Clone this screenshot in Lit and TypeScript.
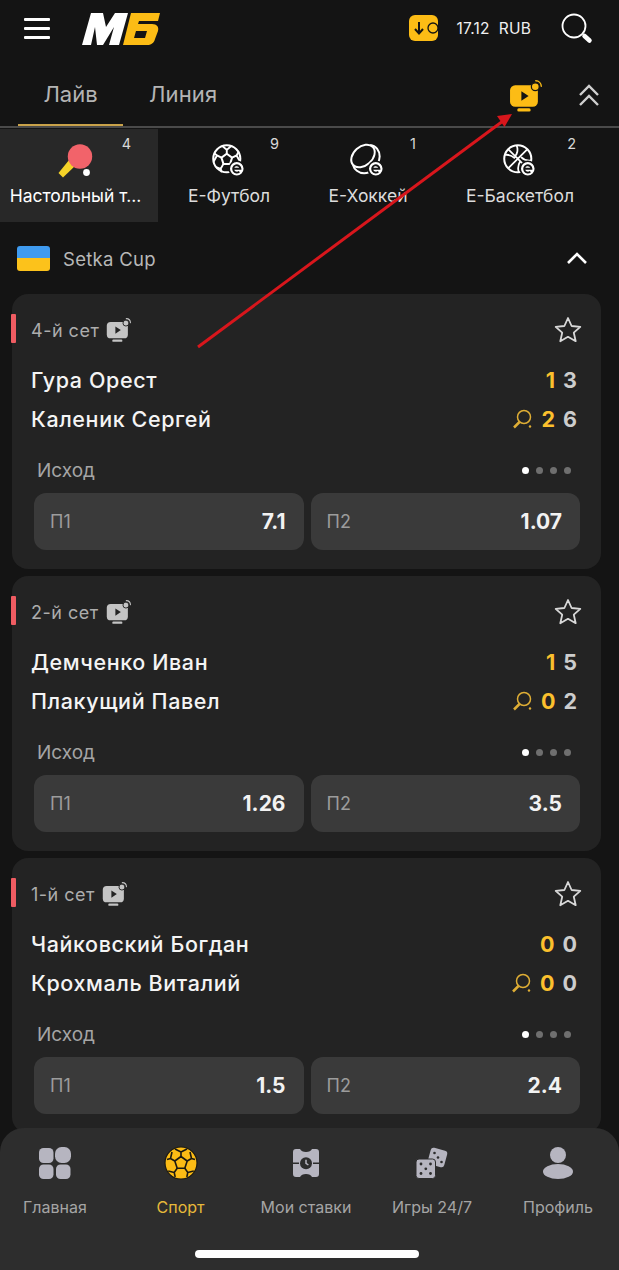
import { LitElement, html, css, svg } from "lit";
import { customElement } from "lit/decorators.js";

const tvIcon = (body: string, play: string, w = 32) => html`<svg width=${w} height=${w} viewBox="0 0 32 32" fill="none">
  <rect x="1" y="5" width="27" height="21" rx="5" fill=${body} />
  <path d="M12 11v9l7-4.500z" fill=${play} />
  <rect x="8" y="27.500" width="13" height="3" rx="1.500" fill=${body} />
  <circle cx="25.500" cy="6.500" r="3.800" fill=${body} stroke=${play} stroke-width="1.200" />
  <path d="M26 0.800a5.500 5.500 0 0 1 5.300 5.300" stroke=${body} stroke-width="1.400" stroke-linecap="round" />
</svg>`;

const eBadge = svg`<circle cx="25" cy="25" r="6.800" fill="#fff" stroke="#141414" stroke-width="1.400"/>
  <path d="M21.700 25h6.600a3.300 3.300 0 1 0-1 2.500" fill="none" stroke="#141414" stroke-width="1.700"/>`;

const sportsIcons: Record<string, unknown> = {
  tt: html`<svg width="40" height="40" viewBox="0 0 40 40">
    <path d="M13.500 18.500l6 6L7 36.500l-4.500-4.500z" fill="#f5d328" />
    <circle cx="24" cy="15.500" r="12.200" fill="#f2636a" />
    <circle cx="30.500" cy="31.500" r="3.400" fill="#fff" />
  </svg>`,
  football: html`<svg width="40" height="40" viewBox="0 0 36 36" fill="none" stroke="#fff" stroke-width="1.800">
    <circle cx="16" cy="16" r="12.200" />
    <path d="M16 11.500l4.800 3.500-1.800 5.600h-6l-1.800-5.600z" />
    <path d="M16 11.500V8l-4-3.500M16 8l4-3.500M20.800 15l4-2 2-3.500M24.800 13l2.800 5M19 20.600l2.500 4.500 4-1M13 20.600l-2.500 4.500 1 3M11.200 15l-4-2-2.500-2M7.200 13l-3 5.500M10.500 25l-4-1.500" stroke-width="1.700" />
    ${eBadge}
  </svg>`,
  hockey: html`<svg width="40" height="40" viewBox="0 0 36 36" fill="none" stroke="#fff" stroke-width="1.800">
    <ellipse cx="13.500" cy="13.500" rx="12" ry="8.500" transform="rotate(-42 13.500 13.500)" />
    <path d="M20 3.500c5 .5 8.500 5 8.500 10.500 0 3-1 5-2 7M4.500 21.500c1 4 5 7.500 10 7.500 2 0 3-.3 4-.8" />
    ${eBadge}
  </svg>`,
  basket: html`<svg width="40" height="40" viewBox="0 0 36 36" fill="none" stroke="#fff" stroke-width="1.800">
    <circle cx="16" cy="16" r="12.200" />
    <path d="M7.500 7.500l17 17M24.500 7.500l-17 17M15 4c1.500 4 .5 8-1.500 9.500M4.500 12.500c3-.5 6 .5 9 3M28 17.500c-3.500.5-6.500-.5-9-3M17 28c-1.500-3.500-.5-7 1.500-10.500" stroke-width="1.600" />
    ${eBadge}
  </svg>`,
};

const navIcons: Record<string, unknown> = {
  home: html`<svg width="34" height="34" viewBox="0 0 34 34" fill="#b6b5c0">
    <rect x="1" y="2" width="14.500" height="15" rx="4.500" />
    <rect x="17" y="1" width="16" height="16" rx="6.500" />
    <rect x="1" y="18.500" width="14.500" height="14.500" rx="4.500" />
    <rect x="18" y="18.500" width="14.500" height="14.500" rx="4.500" />
  </svg>`,
  sport: html`<svg width="34" height="34" viewBox="0 0 34 34">
    <circle cx="17" cy="17" r="16" fill="#fcbc15" stroke="#1c1a12" stroke-width="1.200" />
    <g fill="none" stroke="#1c1a12" stroke-width="1.600" stroke-linejoin="round">
      <path d="M17 10.500l6.200 4.500-2.400 7.300h-7.600L10.800 15z" />
      <path d="M17 10.500V6l-6-3M17 6l6-3M23.200 15l4.300-2.500 3.500 1M27.500 12.500L26 6M20.800 22.300l3 4.200-1 4.500M23.800 26.500l6-1.500M13.200 22.300l-3 4.200 1 4.500M10.200 26.500l-6-1.500M10.800 15l-4.300-2.500-3.500 1M6.500 12.500L8 6" />
    </g>
  </svg>`,
  bets: html`<svg width="32" height="32" viewBox="0 0 32 32">
    <path d="M6 2h4c1 2 3 3 6 3s5-1 6-3h4a3 3 0 0 1 3 3v22a3 3 0 0 1-3 3h-4c-1-2-3-3-6-3s-5 1-6 3H6a3 3 0 0 1-3-3V5a3 3 0 0 1 3-3z" fill="#b6b5c0" />
    <path d="M2 16.200h7M23 16.200h7" stroke="#2d2d2d" stroke-width="1.500" />
    <circle cx="16" cy="16.200" r="6" fill="#2d2d2d" />
    <path d="M16 12.800v3.600l2.400 1.600" stroke="#b6b5c0" stroke-width="1.500" fill="none" />
  </svg>`,
  games: html`<svg width="36" height="36" viewBox="0 0 36 36">
    <rect x="15" y="4" width="17" height="17" rx="3" fill="#b6b5c0" transform="rotate(15 23.500 12.500)" />
    <circle cx="20.500" cy="8" r="1.300" fill="#2d2d2d" /><circle cx="24" cy="12.500" r="1.300" fill="#2d2d2d" /><circle cx="27.500" cy="17" r="1.300" fill="#2d2d2d" />
    <rect x="2" y="14" width="19.500" height="19.500" rx="3" fill="#b6b5c0" stroke="#2d2d2d" stroke-width="1" />
    <g fill="#2d2d2d"><circle cx="7" cy="19" r="1.400"/><circle cx="16.500" cy="19" r="1.400"/><circle cx="11.800" cy="23.800" r="1.400"/><circle cx="7" cy="28.500" r="1.400"/><circle cx="16.500" cy="28.500" r="1.400"/></g>
  </svg>`,
  profile: html`<svg width="32" height="34" viewBox="0 0 32 34" fill="#b6b5c0">
    <circle cx="16" cy="9" r="8" />
    <ellipse cx="16" cy="25.500" rx="15" ry="7.500" />
  </svg>`,
};

interface Match { set: string; a: string; b: string; sa: [string, string]; sb: [string, string]; p1: string; p2: string }

const matches: Match[] = [
  { set: "4-й сет", a: "Гура Орест", b: "Каленик Сергей", sa: ["1", "3"], sb: ["2", "6"], p1: "7.1", p2: "1.07" },
  { set: "2-й сет", a: "Демченко Иван", b: "Плакущий Павел", sa: ["1", "5"], sb: ["0", "2"], p1: "1.26", p2: "3.5" },
  { set: "1-й сет", a: "Чайковский Богдан", b: "Крохмаль Виталий", sa: ["0", "0"], sb: ["0", "0"], p1: "1.5", p2: "2.4" },
];

const sports = [
  { id: "tt", name: "Настольный т...", count: "4", active: true },
  { id: "football", name: "Е-Футбол", count: "9" },
  { id: "hockey", name: "Е-Хоккей", count: "1" },
  { id: "basket", name: "Е-Баскетбол", count: "2" },
];

const nav = [
  { id: "home", name: "Главная" },
  { id: "sport", name: "Спорт", active: true },
  { id: "bets", name: "Мои ставки" },
  { id: "games", name: "Игры 24/7" },
  { id: "profile", name: "Профиль" },
];

@customElement("app-root")
export class AppRoot extends LitElement {
  static styles = css`
    :host {
      display: block;
      position: relative;
      width: 619px;
      height: 1270px;
      overflow: hidden;
      background: #141414;
      color: #fff;
      font-family: Inter, "Liberation Sans", sans-serif;
    }
    .top {
      height: 60px;
      display: flex;
      align-items: center;
      padding: 0 26px 3px 24px;
      box-sizing: border-box;
    }
    .burger { display: flex; flex-direction: column; gap: 6.500px; width: 26px; margin-right: 32px; }
    .burger i { display: block; height: 2.500px; background: #fff; border-radius: 1px; }
    .logo { display: block; }
    .spacer { flex: 1; }
    .wallet { display: block; margin-right: 18px; }
    .balance { font-size: 15.500px; letter-spacing: 0.2px; color: #f0f0f0; margin-right: 30px; white-space: pre; }
    .search { display: block; }
    .tabs {
      height: 68px;
      display: flex;
      align-items: stretch;
      border-bottom: 2px solid #4a4a4a;
      box-sizing: border-box;
      padding-right: 19px;
    }
    .tab { font-size: 22px; color: #b4b4b4; display: flex; align-items: center; justify-content: center; padding-top: 2px; box-sizing: border-box; }
    .tab.one { width: 105px; margin-left: 18px; position: relative; }
    .tab.one::after { content: ""; position: absolute; left: 0; right: 0; bottom: 0; height: 2px; background: #c9a24a; }
    .tab.two { margin-left: 26px; letter-spacing: 0.1px; }
    .tv { margin-right: 36px; display: block; align-self: center; margin-top: 7px; }
    .tv svg { display: block; }
    .chev { display: block; align-self: center; margin-top: 4px; }
    .sports { display: grid; grid-template-columns: 158px 142px 136px 168px 15px; height: 93px; margin-top: 1px; }
    .sport { position: relative; display: flex; flex-direction: column; align-items: center; padding-top: 12px; box-sizing: border-box; }
    .sport.active { background: #282828; padding-right: 7px; }
    .sport svg { display: block; }
    .sport .name { font-size: 17.500px; margin-top: 5px; color: #dcdcdc; white-space: nowrap; line-height: 20px; }
    .sport.active .name { color: #fff; }
    .sport .count { position: absolute; top: 6px; right: 27px; font-size: 14.500px; color: #d8d8d8; }
    .sport:nth-child(2) .count { right: 21px; }
    .sport:nth-child(3) .count { right: 20px; }
    .sport:nth-child(4) .count { right: 28px; }
    .league { height: 72px; display: flex; align-items: center; padding: 0 31px 0 17px; box-sizing: border-box; }
    .flag { width: 33px; height: 25px; border-radius: 3px; overflow: hidden; margin-right: 13px; display: flex; flex-direction: column; }
    .flag i { flex: 1; }
    .league .ln { font-size: 18.500px; color: #b8b8b8; flex: 1; letter-spacing: 0.3px; padding-top: 1px; }
    .cards { display: flex; flex-direction: column; gap: 7px; padding: 0 18px 0 12px; }
    .card { background: #232323; border-radius: 16px; height: 275px; position: relative; box-sizing: border-box; padding: 0 21px 0 19px; display: flex; flex-direction: column; flex-shrink: 0; }
    .head { height: 66px; display: flex; align-items: center; padding-top: 6px; box-sizing: border-box; }
    .marker { position: absolute; left: -1px; top: 20px; width: 5px; height: 29px; border-radius: 1px; background: #ef5c62; }
    .set { font-size: 18px; color: #adadad; margin-right: 7px; letter-spacing: 0.5px; }
    .star { margin-left: auto; margin-right: -3px; display: block; }
    .row { display: flex; align-items: center; height: 39px; font-size: 21.500px; font-weight: 500; color: #f4f4f4; letter-spacing: 0.6px; }
    .row .score { margin-left: auto; padding: 1px 3px 0 0; display: flex; align-items: center; gap: 8px; font-weight: 700; font-size: 21.500px; letter-spacing: 0; }
    .score .y { color: #fbc02d; }
    .score .g { color: #cdcdcd; }
    .score .ic { display: block; margin-right: 0; }
    .market { display: flex; align-items: center; margin-top: 12px; height: 40px; padding-left: 6px; }
    .market .lbl { font-size: 19px; color: #a5a5a5; }
    .dots { margin-left: auto; display: flex; gap: 7px; padding-right: 9px; }
    .dots i { width: 7px; height: 7px; border-radius: 50%; background: #6f6f6f; }
    .dots i:first-child { background: #fff; }
    .odds { display: grid; grid-template-columns: 1fr 1fr; gap: 7px; margin: 3px 0 0 3px; }
    .odd { height: 57px; background: #3a3a3a; border-radius: 12px; display: flex; align-items: center; justify-content: space-between; padding: 0 18px 0 16px; }
    .odd .k { font-size: 18px; color: #9c9c9c; }
    .odd .v { font-size: 21px; font-weight: 700; color: #f2f2f2; }
    .nav { position: absolute; left: 0; right: 0; bottom: 0; height: 142px; background: #2d2d2d; border-radius: 24px 24px 0 0; display: grid; grid-template-columns: 110px 141px 110px 142px 110px 6px; box-sizing: border-box; }
    .item { display: flex; flex-direction: column; align-items: center; padding-top: 17px; }
    .ico { height: 36px; display: flex; align-items: center; justify-content: center; }
    .item .t { font-size: 16px; color: #a5a5a5; margin-top: 16px; white-space: nowrap; line-height: 20px; }
    .item.active .t { color: #e8b93a; }
    .home { position: absolute; left: 195px; bottom: 12px; width: 224px; height: 8px; border-radius: 4px; background: #fff; }
    .arrow { position: absolute; left: 0; top: 0; pointer-events: none; }
  `;

  private card(m: Match) {
    return html`<div class="card">
      <div class="marker"></div>
      <div class="head">
        <span class="set">${m.set}</span>
        ${tvIcon("#c4c4c4", "#232323", 25)}
        <svg class="star" width="30" height="30" viewBox="0 0 30 30" fill="none" stroke="#d8d8d8" stroke-width="1.800" stroke-linejoin="round">
          <path d="M15 3l3.600 8 8.700.9-6.500 5.800 1.900 8.500L15 21.800l-7.700 4.400 1.900-8.500-6.500-5.800 8.700-.9z" />
        </svg>
      </div>
      <div class="row"><span>${m.a}</span>
        <span class="score"><span class="y">${m.sa[0]}</span><span class="g">${m.sa[1]}</span></span></div>
      <div class="row"><span>${m.b}</span>
        <span class="score">
          <svg class="ic" width="21" height="21" viewBox="0 0 21 21" fill="none" stroke="#dfae35" stroke-width="1.500">
            <circle cx="12" cy="8" r="6.500" /><path d="M7.500 13L2 18.500" stroke-width="2.500" /><circle cx="18" cy="17.500" r="1.200" fill="#dfae35" stroke="none" />
          </svg>
          <span class="y">${m.sb[0]}</span><span class="g">${m.sb[1]}</span></span></div>
      <div class="market"><span class="lbl">Исход</span><span class="dots"><i></i><i></i><i></i><i></i></span></div>
      <div class="odds">
        <div class="odd"><span class="k">П1</span><span class="v">${m.p1}</span></div>
        <div class="odd"><span class="k">П2</span><span class="v">${m.p2}</span></div>
      </div>
    </div>`;
  }

  render() {
    return html`
      <div class="top">
        <div class="burger"><i></i><i></i><i></i></div>
        <svg class="logo" width="78" height="33" viewBox="0 0 78 33">
          <path d="M0 33L9 1h12l3 14L33 1h13l-9 32H27l5-18-11 18h-6l-2-18-4 18z" fill="#fff" />
          <path d="M49 1h29l-2 8H57l-1 3h14c5 0 7 3 6 7l-3 8c-1 4-4 6-8 6H41z" fill="#fcbc15" />
          <path d="M54 19h11l-2 7H52z" fill="#141414" />
        </svg>
        <span class="spacer"></span>
        <svg class="wallet" width="30" height="28" viewBox="0 0 30 28">
          <rect x="0" y="0" width="29" height="26" rx="6" fill="#fcbc15" />
          <path d="M10 7v11M6 14l4 4.500 4-4.500" fill="none" stroke="#141414" stroke-width="2" />
          <circle cx="24" cy="13" r="5" fill="#fcbc15" stroke="#141414" stroke-width="1.300" />
        </svg>
        <span class="balance">17.12  RUB</span>
        <svg class="search" width="32" height="32" viewBox="0 0 32 32" fill="none" stroke="#fff">
          <circle cx="13" cy="13" r="11.500" stroke-width="1.800" />
          <path d="M23.500 23l5 4.500" stroke-width="4.500" stroke-linecap="round" />
        </svg>
      </div>
      <div class="tabs">
        <span class="tab one">Лайв</span>
        <span class="tab two">Линия</span>
        <span class="spacer"></span>
        <span class="tv">${tvIcon("#fcbc15", "#141414", 33)}</span>
        <svg class="chev" width="22" height="24" viewBox="0 0 22 24" fill="none" stroke="#cfcfcf" stroke-width="2.400">
          <path d="M2 12l9-9 9 9M2 22l9-9 9 9" />
        </svg>
      </div>
      <div class="sports">
        ${sports.map(
          (s) => html`<div class="sport ${s.active ? "active" : ""}">
            ${sportsIcons[s.id]}
            <span class="name">${s.name}</span>
            <span class="count">${s.count}</span>
          </div>`
        )}
      </div>
      <div class="league">
        <span class="flag"><i style="background:#3f9bf0"></i><i style="background:#fcc21b"></i></span>
        <span class="ln">Setka Cup</span>
        <svg width="22" height="14" viewBox="0 0 22 14" fill="none" stroke="#fff" stroke-width="2.600"><path d="M2 12l9-9 9 9" /></svg>
      </div>
      <div class="cards">${matches.map((m) => this.card(m))}</div>
      <div class="nav">
        ${nav.map(
          (n) => html`<div class="item ${n.active ? "active" : ""}">
            <div class="ico">${navIcons[n.id]}</div>
            <span class="t">${n.name}</span>
          </div>`
        )}
      </div>
      <div class="home"></div>
      <svg class="arrow" width="619" height="1270" viewBox="0 0 619 1270">
        <path d="M198 347L503 121" stroke="#d8161c" stroke-width="3" fill="none" />
        <path d="M512 114l-15 2 7.500 11z" fill="#d8161c" />
      </svg>
    `;
  }
}
